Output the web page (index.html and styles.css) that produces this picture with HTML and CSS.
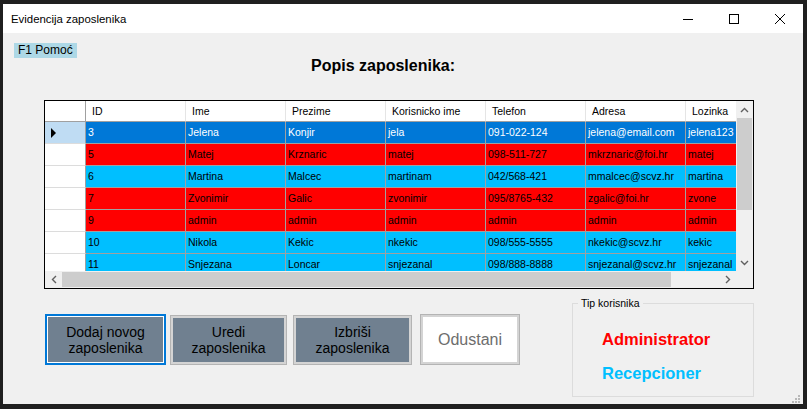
FILE: index.html
```html
<!DOCTYPE html>
<html lang="hr">
<head>
<meta charset="utf-8">
<title>Evidencija zaposlenika</title>
<link rel="stylesheet" href="styles.css">
</head>
<body>
<div class="window">
  <div class="titlebar">
    <div class="title">Evidencija zaposlenika</div>
    <div class="ctl"><svg width="10" height="10" viewBox="0 0 10 10"><path d="M0 5.5H10" stroke="#000" stroke-width="1"/></svg></div>
    <div class="ctl"><svg width="10" height="10" viewBox="0 0 10 10"><rect x="0.5" y="0.5" width="9" height="9" fill="none" stroke="#000" stroke-width="1"/></svg></div>
    <div class="ctl"><svg width="10" height="10" viewBox="0 0 10 10"><path d="M0 0L10 10M10 0L0 10" stroke="#000" stroke-width="1"/></svg></div>
  </div>
  <div class="client">
    <div class="help">F1 Pomoć</div>
    <div class="heading">Popis zaposlenika:</div>
    <div class="grid">
      <div class="viewport">
        <div class="row hrow">
          <div class="rh corner"></div>
          <div class="cell">ID</div>
          <div class="cell">Ime</div>
          <div class="cell">Prezime</div>
          <div class="cell">Korisnicko ime</div>
          <div class="cell">Telefon</div>
          <div class="cell">Adresa</div>
          <div class="cell">Lozinka</div>
        </div>
        <div class="row sel">
          <div class="rh cur"><svg width="6" height="10" viewBox="0 0 6 10"><path d="M0 0L5 5L0 10Z" fill="#000"/></svg></div>
          <div class="cell">3</div><div class="cell">Jelena</div><div class="cell">Konjir</div><div class="cell">jela</div><div class="cell">091-022-124</div><div class="cell">jelena@email.com</div><div class="cell">jelena123</div>
        </div>
        <div class="row red">
          <div class="rh"></div>
          <div class="cell">5</div><div class="cell">Matej</div><div class="cell">Krznaric</div><div class="cell">matej</div><div class="cell">098-511-727</div><div class="cell">mkrznaric@foi.hr</div><div class="cell">matej</div>
        </div>
        <div class="row sky">
          <div class="rh"></div>
          <div class="cell">6</div><div class="cell">Martina</div><div class="cell">Malcec</div><div class="cell">martinam</div><div class="cell">042/568-421</div><div class="cell">mmalcec@scvz.hr</div><div class="cell">martina</div>
        </div>
        <div class="row red">
          <div class="rh"></div>
          <div class="cell">7</div><div class="cell">Zvonimir</div><div class="cell">Galic</div><div class="cell">zvonimir</div><div class="cell">095/8765-432</div><div class="cell">zgalic@foi.hr</div><div class="cell">zvone</div>
        </div>
        <div class="row red">
          <div class="rh"></div>
          <div class="cell">9</div><div class="cell">admin</div><div class="cell">admin</div><div class="cell">admin</div><div class="cell">admin</div><div class="cell">admin</div><div class="cell">admin</div>
        </div>
        <div class="row sky">
          <div class="rh"></div>
          <div class="cell">10</div><div class="cell">Nikola</div><div class="cell">Kekic</div><div class="cell">nkekic</div><div class="cell">098/555-5555</div><div class="cell">nkekic@scvz.hr</div><div class="cell">kekic</div>
        </div>
        <div class="row sky">
          <div class="rh"></div>
          <div class="cell">11</div><div class="cell">Snjezana</div><div class="cell">Loncar</div><div class="cell">snjezanal</div><div class="cell">098/888-8888</div><div class="cell">snjezanal@scvz.hr</div><div class="cell">snjezanal</div>
        </div>
      </div>
      <div class="vscroll">
        <div class="sbtn"><svg width="9" height="6" viewBox="0 0 9 6"><path d="M1 5L4.5 1.5L8 5" fill="none" stroke="#606060" stroke-width="1.4"/></svg></div>
        <div class="vthumb"></div>
        <div class="track"></div>
        <div class="sbtn"><svg width="9" height="6" viewBox="0 0 9 6"><path d="M1 1L4.5 4.5L8 1" fill="none" stroke="#606060" stroke-width="1.4"/></svg></div>
      </div>
      <div class="hscroll">
        <div class="sbtn"><svg width="6" height="9" viewBox="0 0 6 9"><path d="M5 1L1.5 4.5L5 8" fill="none" stroke="#606060" stroke-width="1.4"/></svg></div>
        <div class="hthumb"></div>
        <div class="track"></div>
        <div class="sbtn"><svg width="6" height="9" viewBox="0 0 6 9"><path d="M1 1L4.5 4.5L1 8" fill="none" stroke="#606060" stroke-width="1.4"/></svg></div>
      </div>
      <div class="corner-box"></div>
    </div>
    <div class="bottom">
      <div class="buttons">
        <button class="btn primary">Dodaj novog<br>zaposlenika</button>
        <button class="btn b2">Uredi<br>zaposlenika</button>
        <button class="btn b3">Izbriši<br>zaposlenika</button>
        <button class="btn cancel">Odustani</button>
      </div>
      <fieldset class="group">
        <legend>Tip korisnika</legend>
        <div class="role admin">Administrator</div>
        <div class="role recep">Recepcioner</div>
      </fieldset>
    </div>
    <svg class="grip" width="8" height="8" viewBox="0 0 8 8">
      <rect x="6" y="0" width="2" height="2" fill="#b8b8b8"/>
      <rect x="3" y="3" width="2" height="2" fill="#b8b8b8"/>
      <rect x="6" y="3" width="2" height="2" fill="#b8b8b8"/>
      <rect x="0" y="6" width="2" height="2" fill="#b8b8b8"/>
      <rect x="3" y="6" width="2" height="2" fill="#b8b8b8"/>
      <rect x="6" y="6" width="2" height="2" fill="#b8b8b8"/>
    </svg>
  </div>
</div>
</body>
</html>
```
FILE: styles.css
```css
html, body {
  margin: 0;
  padding: 0;
  background: #1f1f1f;
  width: 807px;
  height: 409px;
  overflow: hidden;
}

.window {
  margin: 4px 0 0 3px;
  width: 800px;
  height: 400px;
  background: #f0f0f0;
  display: flex;
  flex-direction: column;
  font-family: "Liberation Sans", Arial, sans-serif;
  color: #000;
}

.titlebar {
  height: 29px;
  background: #fff;
  display: flex;
  align-items: center;
  flex: none;
}

.title {
  flex: 1;
  padding-left: 8px;
  font-size: 11.4px;
  padding-top: 1px;
}

.ctl {
  width: 46px;
  height: 29px;
  display: flex;
  align-items: center;
  justify-content: center;
}

.client {
  flex: 1;
  position: relative;
}

.help {
  margin: 10px 0 0 11px;
  width: 63px;
  height: 15px;
  box-sizing: border-box;
  padding-left: 4px;
  background: #add8e6;
  font-size: 12px;
  line-height: 15px;
}

.heading {
  margin-left: 308px;
  font-size: 16px;
  font-weight: bold;
  line-height: 16px;
}

.grid {
  margin: 26px 0 0 41px;
  width: 710px;
  height: 189px;
  box-sizing: border-box;
  border: 1px solid #000;
  display: grid;
  grid-template-columns: 691px 17px;
  grid-template-rows: 170px 17px;
  background: #f0f0f0;
}

.viewport {
  overflow: hidden;
  background: #fff;
}

.row {
  display: flex;
  height: 22px;
  font-size: 10.5px;
}

.cell {
  flex: none;
  width: 100px;
  box-sizing: border-box;
  border-right: 1px solid #a0a0a0;
  border-bottom: 1px solid #a0a0a0;
  padding-left: 2px;
  line-height: 21px;
  white-space: nowrap;
  overflow: hidden;
}

.rh {
  flex: none;
  width: 41px;
  box-sizing: border-box;
  background: #fff;
  border-right: 1px solid #a0a0a0;
  border-bottom: 1px solid #dcdcdc;
  display: flex;
  align-items: center;
  padding-left: 6px;
}

.rh.cur {
  background: #bfdcf3;
}

.hrow {
  height: 21px;
}

.hrow .cell {
  background: #fff;
  padding-left: 6px;
  line-height: 20px;
  border-right-color: #e5e5e5;
}

.hrow .rh {
  border-bottom-color: #a0a0a0;
}

.sel .cell {
  background: #0078d7;
  color: #fff;
}

.red .cell {
  background: #ff0000;
}

.sky .cell {
  background: #00bfff;
}

.vscroll {
  display: flex;
  flex-direction: column;
  background: #f0f0f0;
}

.hscroll {
  display: flex;
  background: #f0f0f0;
}

.sbtn {
  flex: none;
  width: 17px;
  height: 17px;
  display: flex;
  align-items: center;
  justify-content: center;
}

.vthumb {
  flex: none;
  height: 92px;
  margin: 0 1px;
  background: #cdcdcd;
}

.hthumb {
  flex: none;
  width: 609px;
  margin: 1px 0;
  background: #cdcdcd;
}

.track {
  flex: 1;
}

.corner-box {
  background: #f0f0f0;
}

.bottom {
  display: flex;
  align-items: flex-start;
  margin-left: 42px;
}

.buttons {
  display: flex;
  align-items: flex-start;
  margin-top: 25px;
}

.btn {
  box-sizing: border-box;
  height: 50px;
  margin: 1px 0 0 0;
  padding: 0;
  font-family: "Liberation Sans", Arial, sans-serif;
  font-size: 14px;
  line-height: 16px;
  color: #000;
  background: #708090;
  border: 1px solid #b4b4b4;
  box-shadow: inset 0 0 0 2px #d4d4d4;
}

.primary {
  width: 121px;
  height: 51px;
  margin-top: 0;
  border: 2px solid #0078d7;
  box-shadow: inset 0 0 0 1px #fff;
}

.b2 {
  width: 117px;
  margin-left: 4px;
}

.b3 {
  width: 119px;
  margin-left: 6px;
}

.cancel {
  width: 100px;
  height: 51px;
  margin: 0 0 0 8px;
  background: #fff;
  color: #6d6d6d;
  font-size: 16px;
}

.group {
  margin: 8px 0 0 52px;
  width: 182px;
  box-sizing: border-box;
  border: 1px solid #dcdcdc;
  padding: 20px 0 13px 0;
  min-width: 0;
}

.group legend {
  margin-left: 5px;
  padding: 0 3px;
  font-size: 10.5px;
  line-height: 12px;
}

.role {
  padding-left: 29px;
  font-size: 16.5px;
  font-weight: bold;
  line-height: 20px;
}

.admin {
  color: #ff0000;
}

.recep {
  color: #00bfff;
  margin-top: 14px;
}

.grip {
  position: absolute;
  right: 3px;
  bottom: 1px;
}
```
